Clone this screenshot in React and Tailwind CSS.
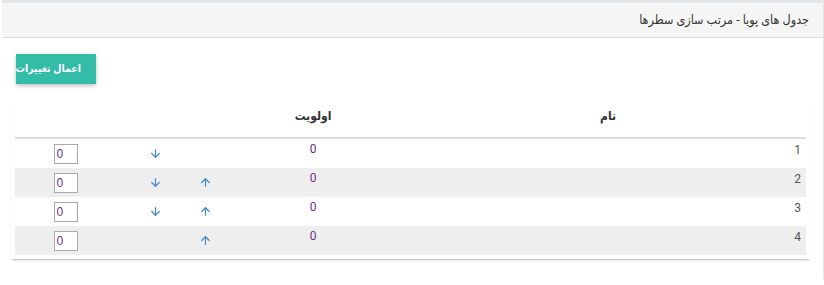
import { ArrowDown, ArrowUp } from 'lucide-react';

const rows = [
  { id: 1, up: false, down: true },
  { id: 2, up: true, down: true },
  { id: 3, up: true, down: true },
  { id: 4, up: true, down: false },
];

export default function App() {
  return (
    <div dir="rtl" className="min-h-screen bg-white font-['Roboto','DejaVu_Sans_Condensed','DejaVu_Sans',sans-serif] text-[#333]">
      <div className="w-[822px] border-t-[3px] border-r border-[#e4e7ea] bg-white">
        <div className="h-[35px] flex items-center pr-[14px] bg-[#f5f5f5] border-b border-[#dcdcdc]">
          <h1 className="text-[12.5px] text-[#333]">جدول های پویا - مرتب سازی سطرها</h1>
        </div>

        <div className="pt-[16px] pb-[20px]">
          <div className="flex justify-end pl-[14px]">
            <button className="w-[80px] h-[30px] bg-[#33bda9] text-white text-[10.5px] font-bold whitespace-nowrap shadow-[0_2px_4px_rgba(0,0,0,0.25)] flex items-center justify-start pr-[15px]">
              اعمال تغییرات
            </button>
          </div>

          <div className="mt-[18px] mr-[13px] w-[799px] pl-[4px] pr-[4px] pb-[4px] shadow-[0_2px_2px_-1px_rgba(0,0,0,0.3)]">
            <div className="w-[791px]">
              <div className="flex h-[37px] items-center border-b-2 border-[#dddddd] text-[12px] font-bold text-[#333]">
                <div className="w-[396px] text-center -mt-[8px]">نام</div>
                <div className="w-[194px] text-center -mt-[8px]">اولویت</div>
                <div className="flex-1" />
              </div>
              {rows.map((r, i) => (
                <div key={r.id} className={`flex h-[29px] items-center text-[12px] ${i % 2 === 1 ? 'bg-[#eeeeee]' : 'bg-white'}`}>
                  <div className="w-[396px] pr-[5px] text-[#555555] -mt-[8px]">{r.id}</div>
                  <div className="w-[194px] text-center text-[#6b2c8c] -mt-[10px]">0</div>
                  <div className="w-[22px] flex justify-center">
                    {r.up && <ArrowUp className="w-[13px] h-[13px] text-[#3d8fcf]" strokeWidth={2.25} />}
                  </div>
                  <div className="w-[78px] flex justify-center">
                    {r.down && <ArrowDown className="w-[13px] h-[13px] text-[#4a86d0]" strokeWidth={2.25} />}
                  </div>
                  <div className="w-[101px] flex justify-center">
                    <input
                      dir="ltr"
                      defaultValue="0"
                      className="w-[24px] h-[20px] border border-[#a9a9a9] bg-white px-[2px] text-[12px] text-[#6b2c8c] font-['Liberation_Sans',sans-serif] outline-none"
                    />
                  </div>
                </div>
              ))}
            </div>
          </div>
        </div>
      </div>
    </div>
  );
}
